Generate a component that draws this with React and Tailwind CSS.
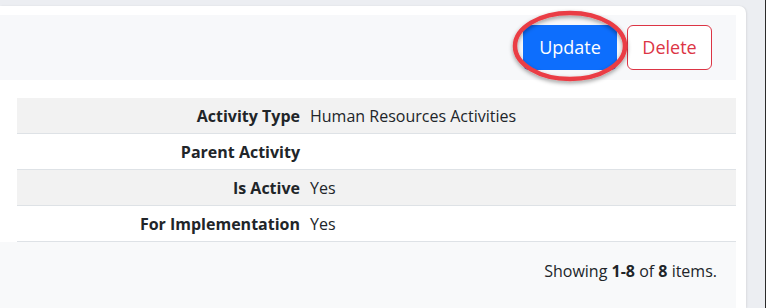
import React from "react";

const rows = [
  { label: "Activity Type", value: "Human Resources Activities" },
  { label: "Parent Activity", value: "" },
  { label: "Is Active", value: "Yes" },
  { label: "For Implementation", value: "Yes" },
];

export default function App() {
  return (
    <div
      className="relative w-[766px] h-[308px] overflow-hidden bg-[#eceef2] flex text-[#212529]"
      style={{ fontFamily: '"Open Sans", "Noto Sans", sans-serif' }}
    >
      <div className="w-[746px] mt-[6px] bg-white rounded-tr-[7px] shadow-[1px_0_2px_rgba(0,0,0,0.08)] pt-[9px] pr-[10px] flex flex-col">
        <div className="h-[65px] bg-[#f7f8fa] flex items-center justify-end gap-[10px] pr-[24px] shrink-0">
          <button className="w-[94px] h-[45px] rounded-[6px] bg-[#0d6efd] text-white text-[18px]">
            Update
          </button>
          <button className="w-[85px] h-[45px] rounded-[6px] border border-[#dc3545] bg-white text-[#dc3545] text-[18px]">
            Delete
          </button>
        </div>
        <div className="h-[18px] shrink-0" />
        <div className="ml-[17px] shrink-0">
          {rows.map((r, i) => (
            <div
              key={r.label}
              className={`flex h-[36px] items-center border-b border-[#dee2e6] text-[16px] ${
                i % 2 === 0 ? "bg-[#f2f2f2]" : "bg-white"
              }`}
            >
              <div className="w-[288px] pr-[5px] text-right font-bold">{r.label}</div>
              <div className="pl-[5px]">{r.value}</div>
            </div>
          ))}
        </div>
        <div className="flex-1 bg-[#f8f9fa] flex justify-end pr-[19px] pt-[17px] text-[16px]">
          <span>
            Showing <b>1-8</b> of <b>8</b> items.
          </span>
        </div>
      </div>
      <div className="flex-1" />
      <div className="w-px bg-[#2b2b2b]" />
      <svg
        className="absolute left-[505px] top-[6px] pointer-events-none"
        width="130"
        height="84"
        viewBox="0 0 130 84"
      >
        <defs>
          <filter id="sh" x="-20%" y="-20%" width="140%" height="150%">
            <feDropShadow dx="0" dy="2" stdDeviation="2" floodColor="#000" floodOpacity="0.4" />
          </filter>
        </defs>
        <ellipse
          cx="65"
          cy="40"
          rx="55"
          ry="33"
          fill="none"
          stroke="#ea3d44"
          strokeWidth="4.5"
          filter="url(#sh)"
        />
      </svg>
    </div>
  );
}
